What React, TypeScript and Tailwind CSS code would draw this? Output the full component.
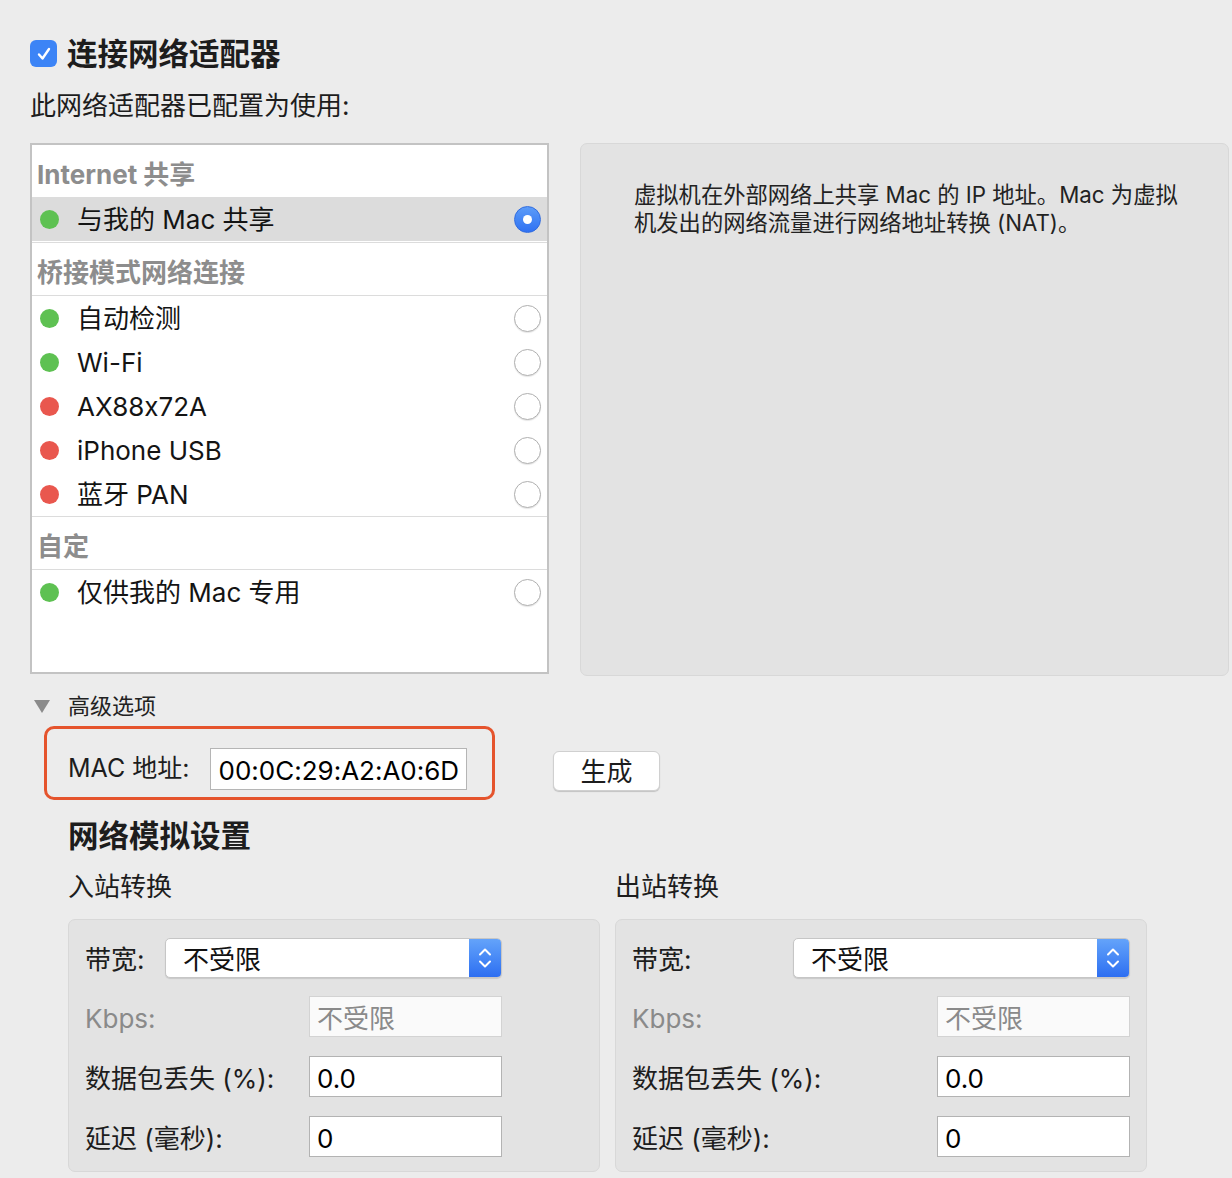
import React from 'react';

type Adapter = { name: string; up: boolean; selected?: boolean };

const bridged: Adapter[] = [
  { name: '自动检测', up: true },
  { name: 'Wi-Fi', up: true },
  { name: 'AX88x72A', up: false },
  { name: 'iPhone USB', up: false },
  { name: '蓝牙 PAN', up: false },
];

function Radio({ on }: { on?: boolean }) {
  if (on) {
    return (
      <span className="block shrink-0 w-[27px] h-[27px] rounded-full bg-linear-to-b from-[#5b9bf8] to-[#3071f2] border border-[#2f6be0] flex items-center justify-center">
        <span className="block w-[9px] h-[9px] rounded-full bg-white" />
      </span>
    );
  }
  return <span className="block shrink-0 w-[27px] h-[27px] rounded-full bg-white border border-[#b0b0b0] shadow-[0_1px_1px_rgba(0,0,0,0.1)]" />;
}

function GroupHeader({ children }: { children: React.ReactNode }) {
  return (
    <div className="h-[52px] flex items-center pt-[6px] pl-[5px] text-[26px] font-bold text-[#8d8d8d]">
      {children}
    </div>
  );
}

function AdapterRow({ a }: { a: Adapter }) {
  return (
    <div className={`h-[44px] flex items-center pl-[8px] pr-[6px] ${a.selected ? 'bg-[#dcdcdc]' : ''}`}>
      <span className={`block shrink-0 w-[19px] h-[19px] rounded-full ${a.up ? 'bg-[#5ec152]' : 'bg-[#e9574e]'}`} />
      <span className="ml-[18px] text-[26px] text-[#141414]">{a.name}</span>
      <span className="ml-auto flex">
        <Radio on={a.selected} />
      </span>
    </div>
  );
}

function Stepper() {
  return (
    <svg width="16" height="26" viewBox="0 0 16 26" fill="none" stroke="white" strokeWidth="2" strokeLinecap="round" strokeLinejoin="round">
      <path d="M3 9.5 L8 4.5 L13 9.5" />
      <path d="M3 16.5 L8 21.5 L13 16.5" />
    </svg>
  );
}

function SimPanel({ title, contentW }: { title: string; contentW: string }) {
  return (
    <div className="w-[532px]">
      <div className="text-[26px] leading-[30px] text-[#1d1d1d]">{title}</div>
      <div className="mt-[17px] h-[253px] bg-[#e3e3e3] border border-[#d8d8d8] rounded-[7px] pl-[16px] pt-[18px]">
        <div className={`${contentW} flex flex-col`}>
          <div className="h-[40px] flex items-center justify-between">
            <span className="text-[26px] text-[#1d1d1d] mt-[3px]">带宽:</span>
            <div className="w-[337px] h-[40px] bg-white rounded-[5px] border border-[#c6c6c6] shadow-[0_1px_1px_rgba(0,0,0,0.12)] flex overflow-hidden">
              <span className="flex-1 pl-[17px] pt-[3px] flex items-center text-[26px] text-[#111]">不受限</span>
              <span className="w-[32px] bg-linear-to-b from-[#64a3fa] to-[#2d6ef1] flex items-center justify-center">
                <Stepper />
              </span>
            </div>
          </div>
          <div className="mt-[18px] h-[41px] flex items-center justify-between">
            <span className="text-[26px] text-[#8a8a8a] mt-[4px]">Kbps:</span>
            <div className="w-[193px] h-[41px] bg-[#fafafa] border border-[#d3d3d3] pl-[7px] pt-[4px] flex items-center text-[26px] text-[#8a8a8a]">不受限</div>
          </div>
          <div className="mt-[19px] h-[41px] flex items-center justify-between">
            <span className="text-[26px] text-[#1d1d1d] mt-[3px]">数据包丢失 (%):</span>
            <div className="w-[193px] h-[41px] bg-white border border-[#b3b3b3] pl-[7px] pt-[4px] flex items-center text-[26px] text-black">0.0</div>
          </div>
          <div className="mt-[19px] h-[41px] flex items-center justify-between">
            <span className="text-[26px] text-[#1d1d1d] mt-[3px]">延迟 (毫秒):</span>
            <div className="w-[193px] h-[41px] bg-white border border-[#b3b3b3] pl-[7px] pt-[4px] flex items-center text-[26px] text-black">0</div>
          </div>
        </div>
      </div>
    </div>
  );
}

export default function App() {
  return (
    <div className="w-[1232px] h-[1178px] overflow-hidden bg-[#ececec] pl-[30px] pt-[40px] text-[#1d1d1d] [font-family:Inter,'Noto_Sans_CJK_SC',sans-serif] [font-feature-settings:'calt'_0]">
      {/* Connect checkbox */}
      <div className="flex items-center h-[27px]">
        <span className="block shrink-0 w-[27px] h-[27px] rounded-[6px] bg-[#3c84f6] flex items-center justify-center">
          <svg width="18" height="18" viewBox="0 0 18 18" fill="none" stroke="white" strokeWidth="2.4" strokeLinecap="round" strokeLinejoin="round">
            <path d="M4 9.5 L7.5 13.5 L14 4" />
          </svg>
        </span>
        <span className="ml-[10px] text-[30.5px] font-bold leading-[36px]">连接网络适配器</span>
      </div>

      <div className="mt-[24px] text-[26px] leading-[30px]">此网络适配器已配置为使用:</div>

      {/* Adapter list + description */}
      <div className="mt-[22px] flex items-start gap-[31px]">
        <div className="w-[519px] h-[531px] bg-white border-2 border-[#c3c3c3] flex flex-col">
          <GroupHeader>Internet 共享</GroupHeader>
          <AdapterRow a={{ name: '与我的 Mac 共享', up: true, selected: true }} />
          <div className="border-t border-[#dcdcdc] mt-[1px]">
            <GroupHeader>桥接模式网络连接</GroupHeader>
          </div>
          <div className="border-t border-[#dcdcdc]">
            {bridged.map((a) => (
              <AdapterRow key={a.name} a={a} />
            ))}
          </div>
          <div className="border-t border-[#dcdcdc]">
            <GroupHeader>自定</GroupHeader>
          </div>
          <div className="border-t border-[#dcdcdc]">
            <AdapterRow a={{ name: '仅供我的 Mac 专用', up: true }} />
          </div>
        </div>

        <div className="w-[649px] h-[533px] bg-[#e3e3e3] border border-[#d8d8d8] rounded-[7px] pl-[53px] pt-[37px] text-[22.3px] leading-[28px] text-[#222]">
          虚拟机在外部网络上共享 Mac 的 IP 地址。Mac 为虚拟
          <br />
          机发出的网络流量进行网络地址转换 (NAT)。
        </div>
      </div>

      {/* Advanced */}
      <div className="mt-[18px] h-[24px] flex items-center pl-[4px]">
        <svg width="16" height="13" viewBox="0 0 16 13">
          <polygon points="0,0 16,0 8,13" fill="#8b8b8b" />
        </svg>
        <span className="ml-[18px] text-[22px] text-[#222]">高级选项</span>
      </div>

      <div className="mt-[8px] ml-[14px] flex items-start">
        <div className="w-[451px] h-[74px] border-[3px] border-[#e5542d] rounded-[10px] pl-[21px] pt-[12px] flex items-center">
          <span className="text-[25px] text-[#1d1d1d]">MAC 地址:</span>
          <div className="ml-[21px] w-[257px] h-[42px] bg-white border border-[#b5b5b5] pl-[7px] pt-[2px] flex items-center text-[26px] text-black">
            00:0C:29:A2:A0:6D
          </div>
        </div>
        <button className="ml-[58px] mt-[25px] w-[107px] h-[40px] bg-white rounded-[6px] border border-[#d0d0d0] shadow-[0_1px_1px_rgba(0,0,0,0.18)] text-[26px] text-[#1d1d1d] flex items-center justify-center">
          生成
        </button>
      </div>

      {/* Network simulation */}
      <div className="ml-[38px] mt-[18px] text-[30.5px] font-bold leading-[36px]">网络模拟设置</div>
      <div className="ml-[38px] mt-[18px] flex gap-[15px]">
        <SimPanel title="入站转换" contentW="w-[417px]" />
        <SimPanel title="出站转换" contentW="w-[498px]" />
      </div>
    </div>
  );
}
